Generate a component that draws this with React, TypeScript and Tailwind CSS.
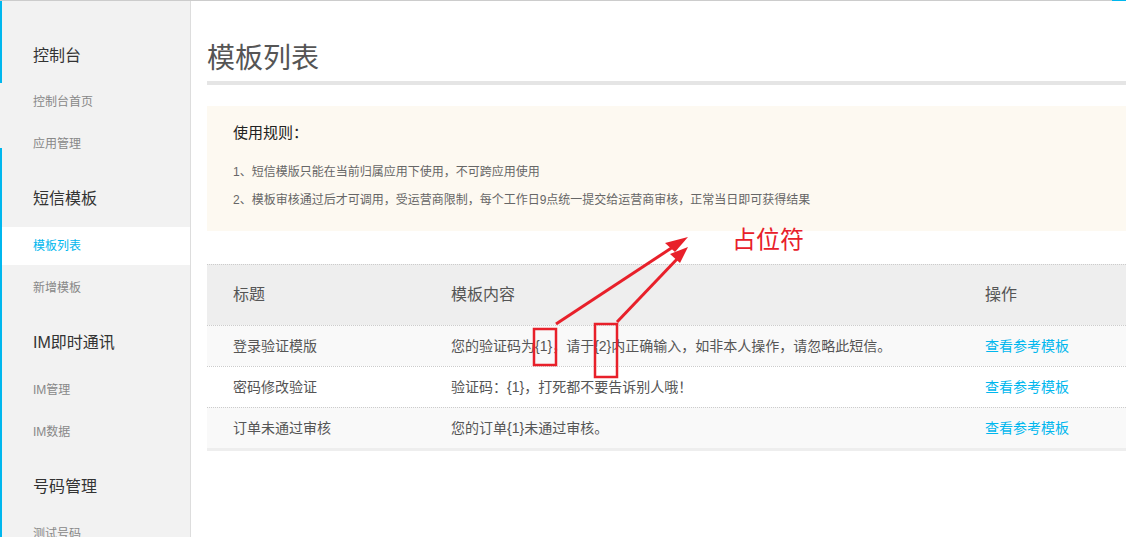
import React from "react";

const font = { fontFamily: '"Liberation Sans", "Noto Sans CJK SC", sans-serif' };

type NavGroup = { title: string; items: string[] };

const groups: NavGroup[] = [
  { title: "控制台", items: ["控制台首页", "应用管理"] },
  { title: "短信模板", items: ["模板列表", "新增模板"] },
  { title: "IM即时通讯", items: ["IM管理", "IM数据"] },
  { title: "号码管理", items: ["测试号码"] },
];

const rows = [
  { title: "登录验证模版", content: "您的验证码为{1}，请于{2}内正确输入，如非本人操作，请忽略此短信。" },
  { title: "密码修改验证", content: "验证码：{1}，打死都不要告诉别人哦！" },
  { title: "订单未通过审核", content: "您的订单{1}未通过审核。" },
];

function Sidebar() {
  return (
    <aside className="w-[191px] shrink-0 bg-[#f2f2f2] border-l-2 border-l-[#00b7ee] border-r border-r-[#dddddd] relative">
      {/* gap in the left accent line */}
      <div className="absolute -left-[2px] top-[82px] h-[65px] w-[2px] bg-[#f2f2f2]" />
      {groups.map((g, gi) => (
        <div key={g.title}>
          <div
            className={`pl-[31px] text-[16px] leading-[24px] text-[#333] ${gi === 0 ? "h-[80px] pt-[43px]" : "h-[60px] pt-[22px]"}`}
          >
            {g.title}
          </div>
          {g.items.map((item) => {
            const active = item === "模板列表";
            return (
              <div key={item} className="h-[42px] flex items-center">
                <div
                  className={`h-[38px] flex items-center pl-[31px] text-[12px] ${active ? "bg-white text-[#00b7ee] w-[calc(100%+1px)] relative z-10" : "text-[#888] w-full"}`}
                >
                  {item}
                </div>
              </div>
            );
          })}
        </div>
      ))}
    </aside>
  );
}

function Annotation() {
  return (
    <div className="absolute inset-0 pointer-events-none">
      <svg width="1126" height="537" className="absolute left-0 top-0">
        <rect x="534" y="329" width="22" height="36" fill="none" stroke="#e8202a" strokeWidth="2.5" />
        <rect x="595" y="324" width="22" height="53" fill="none" stroke="#e8202a" strokeWidth="2.5" />
        <line x1="556" y1="324" x2="676" y2="245" stroke="#e8202a" strokeWidth="3" />
        <polygon points="688,237 665,243 675,252" fill="#e8202a" />
        <line x1="617" y1="322" x2="679" y2="257" stroke="#e8202a" strokeWidth="3" />
        <polygon points="688,247 670,254 680,263" fill="#e8202a" />
      </svg>
      <div className="absolute left-[732px] top-[224px] text-[24px] leading-[32px] text-[#e8202a]" style={font}>
        占位符
      </div>
    </div>
  );
}

export default function App() {
  return (
    <div className="w-[1126px] h-[537px] overflow-hidden bg-white relative" style={font}>
      <div className="h-px bg-[#cccccc] relative">
        <div className="absolute right-0 top-0 h-px w-[14px] bg-[#00b7ee]" />
      </div>
      <div className="flex h-[536px]">
        <Sidebar />
        <main className="flex-1 pl-[16px] pt-[38px]">
          <h1 className="text-[28px] leading-[40px] text-[#555] font-normal">模板列表</h1>
          <div className="h-[4px] bg-[#e5e5e5] mt-[2px]" />

          {/* Rules */}
          <div className="mt-[21px] h-[125px] bg-[#fdf9f1] pl-[26px] pt-[16px]">
            <div className="text-[15px] leading-[22px] text-[#222]">使用规则：</div>
            <div className="mt-[18px] text-[12px] leading-[20px] text-[#666]">
              1、短信模版只能在当前归属应用下使用，不可跨应用使用
            </div>
            <div className="mt-[8px] text-[12px] leading-[20px] text-[#666]">
              2、模板审核通过后才可调用，受运营商限制，每个工作日9点统一提交给运营商审核，正常当日即可获得结果
            </div>
          </div>

          {/* Table */}
          <div className="mt-[33px] border-b-[3px] border-[#eeeeee]">
            <div className="grid grid-cols-[218px_534px_1fr] h-[61px] items-center bg-[#eeeeee] border-t border-dotted border-[#cccccc] text-[16px] text-[#555]">
              <div className="pl-[26px]">标题</div>
              <div className="pl-[26px]">模板内容</div>
              <div className="pl-[26px]">操作</div>
            </div>
            {rows.map((r, i) => (
              <div
                key={r.title}
                className={`grid grid-cols-[218px_534px_1fr] h-[41px] items-center border-t border-dotted border-[#cccccc] text-[14px] text-[#555] ${i % 2 === 0 ? "bg-[#f9f9f9]" : "bg-white"}`}
              >
                <div className="pl-[26px]">{r.title}</div>
                <div className="pl-[26px] whitespace-nowrap">{r.content}</div>
                <div className="pl-[26px] text-[#00b7ee]">查看参考模板</div>
              </div>
            ))}
          </div>
        </main>
      </div>
      <Annotation />
    </div>
  );
}
